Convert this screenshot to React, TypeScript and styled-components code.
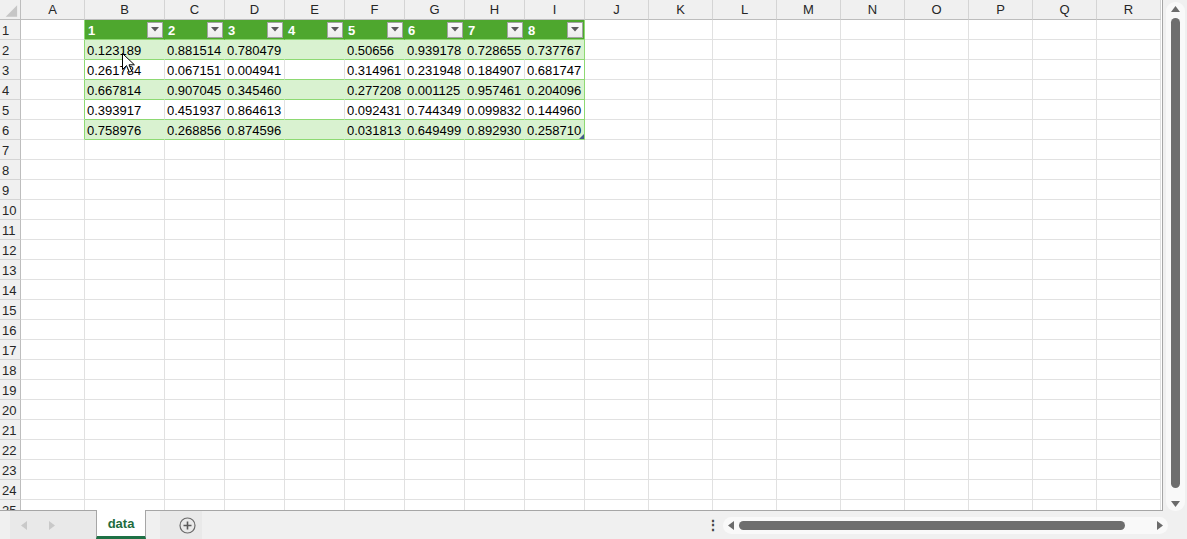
import styled, { createGlobalStyle } from "styled-components";

const GlobalStyle = createGlobalStyle`
  html, body {
    margin: 0;
    padding: 0;
    background: #ffffff;
  }
  body {
    font-family: "Liberation Sans", Arial, sans-serif;
    overflow: hidden;
  }
`;

const GREEN_HEAD = "#4ea72e";
const GREEN_BAND = "#d9f2d0";
const GREEN_LINE = "#8ed973";
const GRID_LINE = "#e1e1e1";

const letters = "ABCDEFGHIJKLMNOPQR".split("");
const colWidths = [64, 80, 60, 60, 60, 60, 60, 60, 60, 64, 64, 64, 64, 64, 64, 64, 64, 64];

const headers = ["1", "2", "3", "4", "5", "6", "7", "8"];
const data: string[][] = [
  ["0.123189", "0.881514", "0.780479", "", "0.50656", "0.939178", "0.728655", "0.737767"],
  ["0.261784", "0.067151", "0.004941", "", "0.314961", "0.231948", "0.184907", "0.681747"],
  ["0.667814", "0.907045", "0.345460", "", "0.277208", "0.001125", "0.957461", "0.204096"],
  ["0.393917", "0.451937", "0.864613", "", "0.092431", "0.744349", "0.099832", "0.144960"],
  ["0.758976", "0.268856", "0.874596", "", "0.031813", "0.649499", "0.892930", "0.258710"],
];

const ROWS = 25;

type Band = "head" | "even" | "odd" | undefined;

function FilterIcon() {
  return (
    <FilterButton>
      <svg width="8" height="5" viewBox="0 0 8 5">
        <path d="M0 0 L8 0 L4 4.5 Z" fill="#5a5a5a" />
      </svg>
    </FilterButton>
  );
}

function Cursor() {
  return (
    <CursorWrap>
      <svg width="14" height="21" viewBox="0 0 14 21">
        <path
          d="M0.5 0.5 L0.5 16.5 L4.5 12.6 L7.4 19.2 L9.8 18.2 L7 11.8 L12.4 11.8 Z"
          fill="#ffffff"
          stroke="#000000"
          strokeWidth="1"
          strokeLinejoin="round"
        />
      </svg>
    </CursorWrap>
  );
}

export default function App() {
  const cells: JSX.Element[] = [];

  // column header row
  cells.push(
    <Corner key="corner">
      <svg width="21" height="20" viewBox="0 0 21 20">
        <path d="M18 5 L18 17 L6 17 Z" fill="#c6c6c6" />
      </svg>
    </Corner>
  );
  letters.forEach((l) => cells.push(<ColHead key={"h" + l}>{l}</ColHead>));

  for (let r = 1; r <= ROWS; r++) {
    cells.push(<RowHead key={"r" + r}>{r}</RowHead>);
    letters.forEach((l, c) => {
      const inTable = r <= 6 && c >= 1 && c <= 8;
      let band: Band;
      let content: React.ReactNode = null;
      if (inTable) {
        if (r === 1) {
          band = "head";
          content = (
            <>
              <HeadLabel>{headers[c - 1]}</HeadLabel>
              <FilterIcon />
            </>
          );
        } else {
          band = r % 2 === 0 ? "even" : "odd";
          content = data[r - 2][c - 1];
        }
      }
      const edgeRight = (r <= 6 && c === 0) || (inTable && c === 8);
      cells.push(
        <Cell key={l + r} $band={band} $edgeRight={edgeRight} $tableBottom={inTable}>
          {content}
          {r === 2 && c === 1 && <Cursor />}
          {r === 6 && c === 8 && (
            <ResizeHandle>
              <svg width="5" height="5" viewBox="0 0 5 5">
                <path d="M5 0 L5 5 L0 5 Z" fill="#44598a" />
              </svg>
            </ResizeHandle>
          )}
        </Cell>
      );
    });
  }

  return (
    <>
      <GlobalStyle />
      <Window>
        <Main>
          <Sheet style={{ gridTemplateColumns: `21px ${colWidths.map((w) => w + "px").join(" ")}` }}>
            {cells}
          </Sheet>
          <VScroll>
            <VTrack>
              <ArrowGlyph>
                <svg width="9" height="6" viewBox="0 0 9 6">
                  <path d="M4.5 0 L9 6 L0 6 Z" fill="#6b6b6b" />
                </svg>
              </ArrowGlyph>
              <VThumb />
              <ArrowGlyph>
                <svg width="9" height="6" viewBox="0 0 9 6">
                  <path d="M0 0 L9 0 L4.5 6 Z" fill="#6b6b6b" />
                </svg>
              </ArrowGlyph>
            </VTrack>
          </VScroll>
        </Main>
        <TabBar>
          <NavArea>
            <svg width="6" height="9" viewBox="0 0 6 9">
              <path d="M6 0 L6 9 L0 4.5 Z" fill="#c9c9c9" />
            </svg>
            <svg width="6" height="9" viewBox="0 0 6 9">
              <path d="M0 0 L0 9 L6 4.5 Z" fill="#c9c9c9" />
            </svg>
          </NavArea>
          <SheetTab>data</SheetTab>
          <Gap />
          <AddArea>
            <svg width="17" height="17" viewBox="0 0 17 17">
              <circle cx="8.5" cy="8.5" r="7.5" fill="none" stroke="#6a6a6a" strokeWidth="1.2" />
              <path d="M8.5 4.5 V12.5 M4.5 8.5 H12.5" stroke="#5a5a5a" strokeWidth="1.6" />
            </svg>
          </AddArea>
          <BarRest>
            <Dots>⋮</Dots>
            <HTrack>
              <svg width="6" height="9" viewBox="0 0 6 9">
                <path d="M6 0 L6 9 L0 4.5 Z" fill="#6b6b6b" />
              </svg>
              <HThumb />
              <svg width="6" height="9" viewBox="0 0 6 9">
                <path d="M0 0 L0 9 L6 4.5 Z" fill="#6b6b6b" />
              </svg>
            </HTrack>
          </BarRest>
        </TabBar>
      </Window>
    </>
  );
}

const Window = styled.div`
  width: 1187px;
  height: 539px;
  display: flex;
  flex-direction: column;
  background: #f0f0f0;
  overflow: hidden;
`;

const Main = styled.div`
  display: flex;
  height: 511px;
  flex-shrink: 0;
`;

const Sheet = styled.div`
  display: grid;
  grid-auto-rows: 20px;
  width: 1163px;
  height: 511px;
  box-sizing: border-box;
  border-right: 1px solid #a6a6a6;
  border-bottom: 1px solid #a6a6a6;
  background: #ffffff;
  overflow: hidden;
  font-size: 13px;
`;

const Corner = styled.div`
  box-sizing: border-box;
  background: #f0f0f0;
  border-right: 1px solid #bdbdbd;
  border-bottom: 1px solid #bdbdbd;
  display: flex;
`;

const ColHead = styled.div`
  box-sizing: border-box;
  background: #f0f0f0;
  border-right: 1px solid #d4d4d4;
  border-bottom: 1px solid #bdbdbd;
  color: #262626;
  display: flex;
  align-items: center;
  justify-content: center;
  font-size: 13px;
`;

const RowHead = styled.div`
  box-sizing: border-box;
  background: #f0f0f0;
  border-right: 1px solid #bdbdbd;
  border-bottom: 1px solid #d4d4d4;
  color: #262626;
  display: flex;
  align-items: center;
  padding-left: 2px;
  padding-top: 1px;
  font-size: 13px;
`;

const Cell = styled.div<{ $band: Band; $edgeRight: boolean; $tableBottom: boolean }>`
  position: relative;
  box-sizing: border-box;
  display: flex;
  align-items: center;
  justify-content: space-between;
  padding: 1px 0 0 2px;
  white-space: nowrap;
  color: #000000;
  background: ${(p) =>
    p.$band === "head" ? GREEN_HEAD : p.$band === "even" ? GREEN_BAND : "#ffffff"};
  border-bottom: 1px solid ${(p) => (p.$tableBottom ? GREEN_LINE : GRID_LINE)};
  border-right: 1px solid
    ${(p) =>
      p.$edgeRight
        ? GREEN_LINE
        : p.$band === "head"
        ? GREEN_HEAD
        : p.$band === "even"
        ? GREEN_BAND
        : GRID_LINE};
`;

const HeadLabel = styled.span`
  color: #ffffff;
  font-weight: bold;
  padding-left: 1px;
`;

const FilterButton = styled.span`
  box-sizing: border-box;
  width: 16px;
  height: 16px;
  margin-right: 1px;
  margin-top: -1px;
  background: linear-gradient(#fafafa, #ececec);
  border: 1px solid #a3a3a3;
  display: flex;
  align-items: center;
  justify-content: center;
`;

const CursorWrap = styled.span`
  position: absolute;
  left: 37px;
  top: 13px;
  z-index: 5;
  display: flex;
  pointer-events: none;
`;

const ResizeHandle = styled.span`
  position: absolute;
  right: 0;
  bottom: 0;
  display: flex;
`;

const VScroll = styled.div`
  flex: 1;
  display: flex;
  padding: 2px 2px 0 3px;
`;

const VTrack = styled.div`
  flex: 1;
  display: flex;
  flex-direction: column;
  align-items: center;
  background: #f9f9f9;
  border-radius: 9px;
  padding: 4px 0 4px;
  gap: 5px;
`;

const ArrowGlyph = styled.span`
  display: flex;
  height: 6px;
`;

const VThumb = styled.div`
  flex: 1;
  width: 9px;
  margin: 1px 0 8px;
  background: #6e6e6e;
  border-radius: 5px;
`;

const TabBar = styled.div`
  display: flex;
  height: 28px;
  flex-shrink: 0;
  background: #f0f0f0;
`;

const NavArea = styled.div`
  width: 86px;
  margin-left: 10px;
  background: #e9e9e9;
  display: flex;
  align-items: center;
  gap: 22px;
  padding-left: 11px;
  box-sizing: border-box;
`;

const SheetTab = styled.div`
  width: 50px;
  box-sizing: border-box;
  margin-top: -1px;
  background: #ffffff;
  border-left: 1px solid #a6a6a6;
  border-right: 1px solid #a6a6a6;
  border-bottom: 3px solid #1e7145;
  color: #1e6c3d;
  font-weight: bold;
  font-size: 13px;
  display: flex;
  align-items: center;
  justify-content: center;
  padding-top: 1px;
`;

const Gap = styled.div`
  width: 14px;
`;

const AddArea = styled.div`
  width: 42px;
  background: #e9e9e9;
  display: flex;
  align-items: center;
  justify-content: center;
  padding-left: 12px;
  box-sizing: border-box;
`;

const BarRest = styled.div`
  flex: 1;
  display: flex;
  align-items: center;
  padding: 0 19px 0 504px;
`;

const Dots = styled.span`
  color: #404040;
  font-size: 14px;
  font-weight: bold;
  width: 17px;
`;

const HTrack = styled.div`
  flex: 1;
  height: 17px;
  background: #f9f9f9;
  border-radius: 9px;
  display: flex;
  align-items: center;
  padding: 0 5px 0 5px;
  gap: 5px;
`;

const HThumb = styled.div`
  height: 9px;
  width: 386px;
  background: #6e6e6e;
  border-radius: 5px;
  margin-right: auto;
`;
